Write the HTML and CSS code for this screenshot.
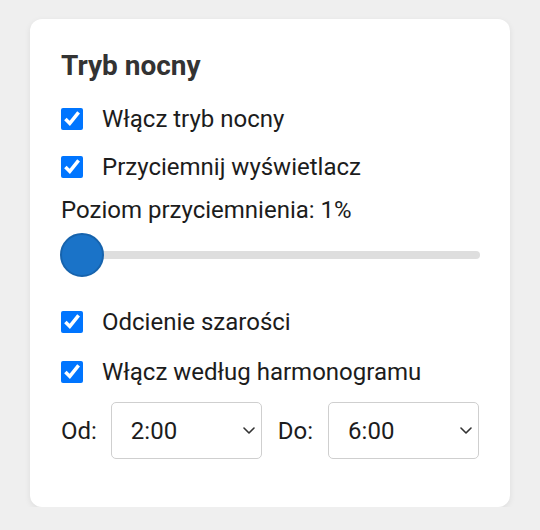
FILE: index.html
```html
<!DOCTYPE html>
<html lang="pl">
<head>
<meta charset="utf-8">
<title>Tryb nocny</title>
<link rel="stylesheet" href="styles.css">
</head>
<body>
<div class="card">
  <h2 class="title">Tryb nocny</h2>
  <label class="row check-row first"><input type="checkbox" class="cb" checked><span>Włącz tryb nocny</span></label>
  <label class="row check-row"><input type="checkbox" class="cb" checked><span>Przyciemnij wyświetlacz</span></label>
  <div class="level">Poziom przyciemnienia: 1%</div>
  <div class="slider">
    <div class="track"></div>
    <div class="thumb"></div>
  </div>
  <label class="row check-row after-slider"><input type="checkbox" class="cb" checked><span>Odcienie szarości</span></label>
  <label class="row check-row tight"><input type="checkbox" class="cb" checked><span>Włącz według harmonogramu</span></label>
  <div class="schedule">
    <span class="lbl">Od:</span>
    <div class="sel-wrap">
      <select class="sel"><option>2:00</option></select>
      <svg class="chev" width="12" height="7" viewBox="0 0 12 7"><path d="M1 1 L6 6 L11 1" fill="none" stroke="#333" stroke-width="1.6" stroke-linecap="round" stroke-linejoin="round"/></svg>
    </div>
    <span class="lbl lbl-do">Do:</span>
    <div class="sel-wrap">
      <select class="sel"><option>6:00</option></select>
      <svg class="chev" width="12" height="7" viewBox="0 0 12 7"><path d="M1 1 L6 6 L11 1" fill="none" stroke="#333" stroke-width="1.6" stroke-linecap="round" stroke-linejoin="round"/></svg>
    </div>
  </div>
</div>
</body>
</html>
```
FILE: styles.css
```css
html, body {
  margin: 0;
  padding: 0;
  background: #efefef;
}
body {
  font-family: Roboto, "Noto Sans", sans-serif;
  color: #1c1c1c;
  padding-top: 19px;
}
.card {
  width: 480px;
  box-sizing: border-box;
  margin: 0 auto;
  background: #fff;
  border-radius: 12px;
  box-shadow: 0 2px 6px rgba(0,0,0,0.08);
  padding: 30px 30px 0 31px;
  height: 488px;
}
.title {
  margin: 0;
  font-size: 28px;
  font-weight: 700;
  color: #333;
  line-height: 34px;
}
.row {
  display: flex;
  align-items: center;
  gap: 19px;
  font-size: 24px;
  height: 48px;
}
.first {
  margin-top: 12px;
}
.cb {
  margin: 0;
  width: 22px;
  height: 22px;
  accent-color: #0075ff;
  flex: none;
}
.level {
  font-size: 24px;
  line-height: 28px;
  margin-top: 5px;
}
.slider {
  position: relative;
  height: 44px;
  margin-top: 9px;
  width: 419px;
}
.track {
  position: absolute;
  left: 0;
  right: 0;
  top: 18px;
  height: 8px;
  border-radius: 4px;
  background: #dedede;
}
.thumb {
  position: absolute;
  left: -1px;
  top: 0;
  width: 40px;
  height: 40px;
  border-radius: 50%;
  background: #1a73c8;
  border: 2px solid #1663ad;
}
.after-slider {
  margin-top: 21px;
}
.tight {
  margin-top: 2px;
}
.schedule {
  display: flex;
  align-items: center;
  gap: 14px;
  margin-top: 6px;
  font-size: 24px;
}
.lbl-do {
  margin-left: 2px;
  margin-right: 1px;
}
.sel-wrap {
  position: relative;
  width: 151px;
  height: 57px;
}
.sel {
  appearance: none;
  -webkit-appearance: none;
  width: 100%;
  height: 100%;
  box-sizing: border-box;
  font-family: Roboto, "Noto Sans", sans-serif;
  font-size: 24px;
  color: #1c1c1c;
  background: #fff;
  border: 1.5px solid #cfcfcf;
  border-radius: 5px;
  padding: 0 30px 0 19px;
  margin: 0;
}
.chev {
  position: absolute;
  right: 7px;
  top: 25px;
  pointer-events: none;
}
```
